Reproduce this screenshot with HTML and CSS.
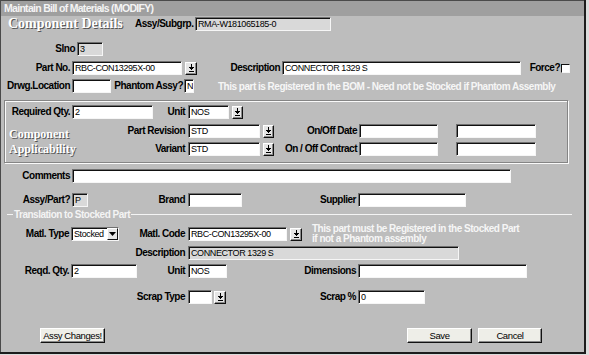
FILE: index.html
```html
<!DOCTYPE html>
<html lang="en">
<head>
  <meta charset="UTF-8" />
  <title>Maintain Bill of Materials (MODIFY)</title>
  <link rel="stylesheet" href="styles.css">
</head>
<body>
  <div class="window">
    <div class="titlebar">Maintain Bill of Materials (MODIFY)</div>

    <div class="form">
      <div class="row r-head">
        <h1 class="engraved">Component Details</h1>
        <label class="lbl w60">Assy/Subgrp.</label>
        <input class="fld ro w136" value="RMA-W181065185-0" readonly>
      </div>

      <div class="row r-slno">
        <label class="lbl w77">Slno</label>
        <input class="fld ro w26" value="3" readonly>
      </div>

      <div class="row r-part">
        <label class="lbl w72">Part No.</label>
        <input class="fld w110" value="RBC-CON13295X-00">
        <span class="drop ml3"><svg width="7" height="8" viewBox="0 0 7 8"><rect x="3" y="0" width="1" height="3"/><rect x="1" y="3" width="5" height="1"/><rect x="2" y="4" width="3" height="1"/><rect x="3" y="5" width="1" height="1"/><rect x="1" y="7" width="5" height="1"/></svg></span>
        <label class="lbl w85">Description</label>
        <input class="fld w239" value="CONNECTOR 1329 S">
        <label class="lbl w40 pr1">Force?</label>
        <span class="check"></span>
      </div>

      <div class="row r-drwg">
        <label class="lbl w72">Drwg.Location</label>
        <input class="fld w39" value="">
        <label class="lbl w73 pr1">Phantom Assy?</label>
        <input class="fld w10" value="N">
        <span class="note ml24">This part is Registered in the BOM - Need not be Stocked if Phantom Assembly</span>
      </div>

      <div class="group">
        <div class="row">
          <label class="lbl w67">Required Qty.</label>
          <input class="fld w81" value="2">
          <label class="lbl w35 pr3">Unit</label>
          <input class="fld w41" value="NOS">
          <span class="drop ml3 narrow"><svg width="7" height="8" viewBox="0 0 7 8"><rect x="3" y="0" width="1" height="3"/><rect x="1" y="3" width="5" height="1"/><rect x="2" y="4" width="3" height="1"/><rect x="3" y="5" width="1" height="1"/><rect x="1" y="7" width="5" height="1"/></svg></span>
        </div>

        <div class="group-lower">
          <div class="engraved applic">Component<br>Applicability</div>
          <div class="applic-rows">
            <div class="row">
              <label class="lbl w68 pr3">Part Revision</label>
              <input class="fld w72" value="STD">
              <span class="drop ml3 narrow"><svg width="7" height="8" viewBox="0 0 7 8"><rect x="3" y="0" width="1" height="3"/><rect x="1" y="3" width="5" height="1"/><rect x="2" y="4" width="3" height="1"/><rect x="3" y="5" width="1" height="1"/><rect x="1" y="7" width="5" height="1"/></svg></span>
              <label class="lbl w85">On/Off Date</label>
              <input class="fld w79" value="">
              <input class="fld w80 ml18" value="">
            </div>
            <div class="row r-variant">
              <label class="lbl w68 pr3">Variant</label>
              <input class="fld w72" value="STD">
              <span class="drop ml3 narrow"><svg width="7" height="8" viewBox="0 0 7 8"><rect x="3" y="0" width="1" height="3"/><rect x="1" y="3" width="5" height="1"/><rect x="2" y="4" width="3" height="1"/><rect x="3" y="5" width="1" height="1"/><rect x="1" y="7" width="5" height="1"/></svg></span>
              <label class="lbl w85">On / Off Contract</label>
              <input class="fld w79" value="">
              <input class="fld w80 ml18" value="">
            </div>
          </div>
        </div>
      </div>

      <div class="row r-comments">
        <label class="lbl w72">Comments</label>
        <input class="fld w439" value="">
      </div>

      <div class="row r-assy">
        <label class="lbl w72">Assy/Part?</label>
        <input class="fld ro w16" value="P" readonly>
        <label class="lbl w100 pr3">Brand</label>
        <input class="fld w54" value="">
        <label class="lbl w116">Supplier</label>
        <input class="fld w108" value="">
      </div>

      <div class="separator">
        <span class="sep-text">Translation to Stocked Part</span>
      </div>

      <div class="row r-matl">
        <label class="lbl w71">Matl. Type</label>
        <div class="select w48">
          <span>Stocked</span>
          <span class="select-btn"><svg width="7" height="4" viewBox="0 0 7 4"><path d="M0 0h7L3.5 4z"/></svg></span>
        </div>
        <label class="lbl w69 pr3">Matl. Code</label>
        <input class="fld w99" value="RBC-CON13295X-00">
        <span class="drop ml3"><svg width="7" height="8" viewBox="0 0 7 8"><rect x="3" y="0" width="1" height="3"/><rect x="1" y="3" width="5" height="1"/><rect x="2" y="4" width="3" height="1"/><rect x="3" y="5" width="1" height="1"/><rect x="1" y="7" width="5" height="1"/></svg></span>
        <span class="note two-line ml10">This part must be Registered in the Stocked Part<br>if not a Phantom assembly</span>
      </div>

      <div class="row r-desc">
        <label class="lbl w188 pr3">Description</label>
        <input class="fld ro w271" value="CONNECTOR 1329 S" readonly>
      </div>

      <div class="row r-reqd">
        <label class="lbl w71">Reqd. Qty.</label>
        <input class="fld w66" value="2">
        <label class="lbl w51 pr3">Unit</label>
        <input class="fld w39" value="NOS">
        <label class="lbl w131">Dimensions</label>
        <input class="fld w169" value="">
      </div>

      <div class="row r-scrap">
        <label class="lbl w188 pr3">Scrap Type</label>
        <input class="fld w24" value="">
        <span class="drop ml2"><svg width="7" height="8" viewBox="0 0 7 8"><rect x="3" y="0" width="1" height="3"/><rect x="1" y="3" width="5" height="1"/><rect x="2" y="4" width="3" height="1"/><rect x="3" y="5" width="1" height="1"/><rect x="1" y="7" width="5" height="1"/></svg></span>
        <label class="lbl w132">Scrap %</label>
        <input class="fld w67" value="0">
      </div>

      <div class="actions">
        <button class="btn w65">Assy Changes!</button>
        <button class="btn w65 btn-save">Save</button>
        <button class="btn w64 btn-cancel">Cancel</button>
      </div>
    </div>
  </div>
</body>
</html>
```

FILE: styles.css
```css
* {
  box-sizing: border-box;
}

body {
  margin: 0;
  background: #dcdcdc;
  font-family: "Liberation Sans", Arial, sans-serif;
  color: #000;
}

.window {
  width: 586px;
  height: 354px;
  background: #bdbdbd;
  border-right: 2px solid #1c1c1c;
  border-bottom: 2px solid #1c1c1c;
  box-shadow: inset 1px 0 0 #4a4a4a;
}

.titlebar {
  height: 16px;
  padding-left: 3px;
  background: #9f9f9f;
  border-top: 1px solid #4a4a4a;
  border-left: 1px solid #4a4a4a;
  color: #f4f4f4;
  font-size: 10.5px;
  font-weight: bold;
  letter-spacing: -0.7px;
  line-height: 14px;
  white-space: nowrap;
}

/* rows */
.row {
  display: flex;
  align-items: center;
  height: 14px;
}

.r-head { margin-top: 1px; padding-left: 8px; }
.r-slno { margin-top: 11px; }
.r-part { margin-top: 5px; }
.r-drwg { margin-top: 4px; }
.r-variant { margin-top: 4px; }
.r-comments { margin-top: 6px; }
.r-assy { margin-top: 10px; }
.r-matl { margin-top: 7px; }
.r-desc { margin-top: 5px; }
.r-reqd { margin-top: 4px; }
.r-scrap { margin-top: 12px; }

.engraved {
  font-family: "Liberation Serif", "Times New Roman", serif;
  font-weight: bold;
  color: #fff;
  text-shadow: 1px 1px 0 #555;
}

h1.engraved {
  flex: none;
  width: 127px;
  margin: 0;
  font-size: 14px;
  line-height: 14px;
  white-space: nowrap;
}

.lbl {
  flex: none;
  padding-right: 2px;
  text-align: right;
  font-size: 10px;
  font-weight: bold;
  letter-spacing: -0.5px;
  line-height: 14px;
  white-space: nowrap;
}

.pr1 { padding-right: 1px; }
.pr3 { padding-right: 3px; }

.fld {
  flex: none;
  height: 14px;
  margin: 0;
  padding: 0 0 0 2px;
  border: 1px solid;
  border-color: #707070 #f6f6f6 #f6f6f6 #707070;
  box-shadow: inset 1px 1px 0 #111;
  background: #fff;
  font-family: inherit;
  font-size: 9px;
  letter-spacing: -0.4px;
  color: #000;
  outline: none;
}

.fld.ro {
  background: #d9d9d9;
}

.drop {
  flex: none;
  display: flex;
  align-items: center;
  justify-content: center;
  width: 12px;
  height: 13px;
  background: #e6e6e6;
  border: 1px solid;
  border-color: #fff #111 #111 #fff;
  box-shadow: inset -1px -1px 0 #8a8a8a;
}

.drop.narrow {
  width: 11px;
}

.drop svg {
  fill: #000;
  shape-rendering: crispEdges;
}

.check {
  flex: none;
  width: 9px;
  height: 9px;
  background: #fff;
  border: 1px solid;
  border-color: #111 #f6f6f6 #f6f6f6 #111;
}

.note {
  flex: none;
  color: #f6f6f6;
  font-size: 10px;
  font-weight: bold;
  letter-spacing: -0.5px;
  white-space: nowrap;
}

.note.two-line {
  line-height: 10px;
}

/* component applicability box */
.group {
  width: 564px;
  height: 63px;
  margin: 7px 0 0 4px;
  padding-top: 4px;
  border: 1px solid #858585;
  box-shadow: inset 1px 1px 0 #fafafa, 1px 1px 0 #fafafa;
}

.group-lower {
  display: grid;
  grid-template-columns: 115px 1fr;
  margin-top: 5px;
}

.applic {
  padding: 3px 0 0 4px;
  font-size: 12px;
  line-height: 15px;
}

/* translation separator */
.separator {
  display: flex;
  align-items: center;
  height: 12px;
  margin: 1px 12px 0 7px;
}

.separator::before,
.separator::after {
  content: "";
  height: 1px;
  background: #f4f4f4;
}

.separator::before {
  width: 6px;
}

.separator::after {
  flex: 1;
}

.sep-text {
  padding: 0 1px;
  color: #f4f4f4;
  font-size: 10px;
  font-weight: bold;
  letter-spacing: -0.5px;
  white-space: nowrap;
}

.select {
  flex: none;
  display: flex;
  align-items: center;
  justify-content: space-between;
  height: 14px;
  padding-left: 2px;
  background: #fff;
  border: 1px solid;
  border-color: #707070 #f6f6f6 #f6f6f6 #707070;
  box-shadow: inset 1px 1px 0 #111;
  font-size: 9px;
  letter-spacing: -0.4px;
}

.select-btn {
  display: flex;
  align-items: center;
  justify-content: center;
  width: 11px;
  height: 12px;
  background: #e6e6e6;
  border: 1px solid;
  border-color: #fff #111 #111 #fff;
}

.select-btn svg {
  fill: #000;
}

/* buttons */
.actions {
  display: flex;
  height: 15px;
  margin-top: 24px;
  padding-left: 40px;
}

.btn {
  flex: none;
  height: 15px;
  padding: 0;
  background: #eeeee8;
  border: 1px solid;
  border-color: #fff #111 #111 #fff;
  box-shadow: inset -1px -1px 0 #8a8a8a;
  font-family: inherit;
  font-size: 9.5px;
  letter-spacing: -0.4px;
  white-space: nowrap;
  color: #000;
}

.btn-save { margin-left: 302px; }
.btn-cancel { margin-left: 6px; }

/* spacing helpers */
.ml2 { margin-left: 2px; }
.ml3 { margin-left: 3px; }
.ml10 { margin-left: 10px; }
.ml18 { margin-left: 18px; }
.ml24 { margin-left: 24px; }

/* widths */
.w10 { width: 10px; }
.w16 { width: 16px; }
.w24 { width: 24px; }
.w26 { width: 26px; }
.w35 { width: 35px; }
.w39 { width: 39px; }
.w40 { width: 40px; }
.w41 { width: 41px; }
.w48 { width: 48px; }
.w51 { width: 51px; }
.w54 { width: 54px; }
.w60 { width: 60px; }
.w64 { width: 64px; }
.w65 { width: 65px; }
.w66 { width: 66px; }
.w67 { width: 67px; }
.w68 { width: 68px; }
.w69 { width: 69px; }
.w71 { width: 71px; }
.w72 { width: 72px; }
.w73 { width: 73px; }
.w77 { width: 77px; }
.w79 { width: 79px; }
.w80 { width: 80px; }
.w81 { width: 81px; }
.w85 { width: 85px; }
.w99 { width: 99px; }
.w100 { width: 100px; }
.w108 { width: 108px; }
.w110 { width: 110px; }
.w116 { width: 116px; }
.w131 { width: 131px; }
.w132 { width: 132px; }
.w136 { width: 136px; }
.w169 { width: 169px; }
.w188 { width: 188px; }
.w239 { width: 239px; }
.w271 { width: 271px; }
.w439 { width: 439px; }
```
